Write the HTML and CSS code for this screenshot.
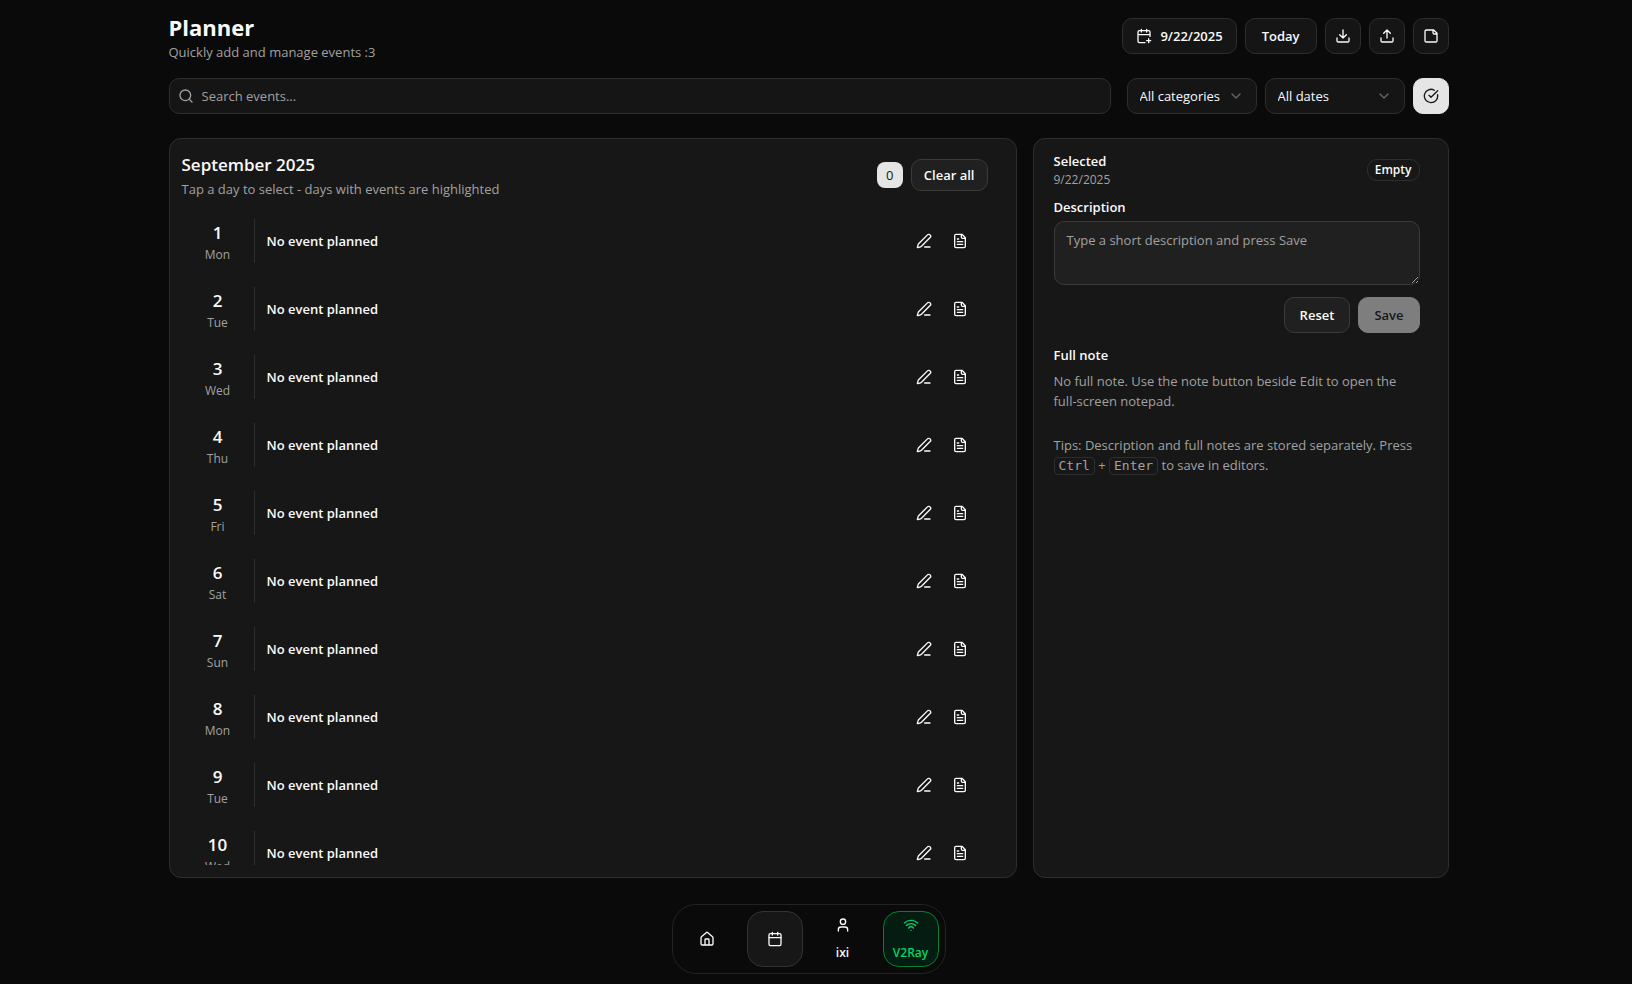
FILE: index.html
```html
<!DOCTYPE html>
<html lang="en">
<head>
<meta charset="utf-8">
<meta name="viewport" content="width=device-width, initial-scale=1">
<title>Planner</title>
<link rel="stylesheet" href="styles.css">
</head>
<body>
<svg class="sprite" aria-hidden="true">
  <symbol id="calendar-plus" viewBox="0 0 24 24"><path d="M16 19h6M16 2v4M19 16v6M21 12.6V6a2 2 0 0 0-2-2H5a2 2 0 0 0-2 2v14a2 2 0 0 0 2 2h8.5M3 10h18M8 2v4"/></symbol>
  <symbol id="download" viewBox="0 0 24 24"><path d="M12 15V3M21 15v4a2 2 0 0 1-2 2H5a2 2 0 0 1-2-2v-4M7 10l5 5 5-5"/></symbol>
  <symbol id="upload" viewBox="0 0 24 24"><path d="M12 3v12M17 8l-5-5-5 5M21 15v4a2 2 0 0 1-2 2H5a2 2 0 0 1-2-2v-4"/></symbol>
  <symbol id="note" viewBox="0 0 24 24"><path d="M16 3H5a2 2 0 0 0-2 2v14a2 2 0 0 0 2 2h14a2 2 0 0 0 2-2V8ZM15 3v4a2 2 0 0 0 2 2h4"/></symbol>
  <symbol id="search" viewBox="0 0 24 24"><circle cx="11" cy="11" r="8"/><path d="m21 21-4.3-4.3"/></symbol>
  <symbol id="chevron" viewBox="0 0 24 24"><path d="m6 9 6 6 6-6"/></symbol>
  <symbol id="check" viewBox="0 0 24 24"><path d="M21.8 10A10 10 0 1 1 17 3.335M9 11l3 3L22 4"/></symbol>
  <symbol id="pen" viewBox="0 0 24 24"><path d="M13 21h8M21.174 6.812a1 1 0 0 0-3.986-3.987L3.842 16.174a2 2 0 0 0-.5.83l-1.321 4.352a.5.5 0 0 0 .623.622l4.353-1.32a2 2 0 0 0 .83-.497z"/></symbol>
  <symbol id="file" viewBox="0 0 24 24"><path d="M15 2H6a2 2 0 0 0-2 2v16a2 2 0 0 0 2 2h12a2 2 0 0 0 2-2V7ZM14 2v4a2 2 0 0 0 2 2h4M10 9H8M16 13H8M16 17H8"/></symbol>
  <symbol id="home" viewBox="0 0 24 24"><path d="M15 21v-8a1 1 0 0 0-1-1h-4a1 1 0 0 0-1 1v8M3 10a2 2 0 0 1 .709-1.528l7-6a2 2 0 0 1 2.582 0l7 6A2 2 0 0 1 21 10v9a2 2 0 0 1-2 2H5a2 2 0 0 1-2-2z"/></symbol>
  <symbol id="calendar" viewBox="0 0 24 24"><path d="M8 2v4M16 2v4M3 10h18"/><rect x="3" y="4" width="18" height="18" rx="2"/></symbol>
  <symbol id="user" viewBox="0 0 24 24"><path d="M19 21v-2a4 4 0 0 0-4-4H9a4 4 0 0 0-4 4v2"/><circle cx="12" cy="7" r="4"/></symbol>
  <symbol id="wifi" viewBox="0 0 24 24"><path d="M12 20h.01M2 8.82a15 15 0 0 1 20 0M5 12.859a10 10 0 0 1 14 0M8.5 16.429a5 5 0 0 1 7 0"/></symbol>
</svg>

<div class="page">
  <header class="header">
    <div>
      <h1 class="title">Planner</h1>
      <p class="muted">Quickly add and manage events :3</p>
    </div>
    <div class="group header-actions">
      <button type="button" class="button with-icon"><svg class="icon"><use href="#calendar-plus"/></svg>9/22/2025</button>
      <button type="button" class="button">Today</button>
      <button type="button" class="button square" aria-label="Download"><svg class="icon"><use href="#download"/></svg></button>
      <button type="button" class="button square" aria-label="Upload"><svg class="icon"><use href="#upload"/></svg></button>
      <button type="button" class="button square" aria-label="Notes"><svg class="icon"><use href="#note"/></svg></button>
    </div>
  </header>

  <div class="toolbar">
    <label class="search">
      <svg class="icon"><use href="#search"/></svg>
      <input type="search" class="search-input" placeholder="Search events..." aria-label="Search events">
    </label>
    <div class="group">
      <label class="picker picker-category">
        <select class="select" aria-label="Category"><option>All categories</option></select>
        <svg class="icon"><use href="#chevron"/></svg>
      </label>
      <label class="picker picker-date">
        <select class="select" aria-label="Dates"><option>All dates</option></select>
        <svg class="icon"><use href="#chevron"/></svg>
      </label>
      <button type="button" class="button square primary" aria-label="Show completed"><svg class="icon"><use href="#check"/></svg></button>
    </div>
  </div>

  <main class="content">
    <section class="card month">
      <div class="month-header">
        <div>
          <h2 class="month-title">September 2025</h2>
          <p class="muted">Tap a day to select - days with events are highlighted</p>
        </div>
        <div class="group">
          <span class="count">0</span>
          <button type="button" class="button small raised">Clear all</button>
        </div>
      </div>
      <ul class="days" id="days"></ul>
    </section>

    <aside class="card details">
      <div class="selected">
        <div>
          <h3 class="heading">Selected</h3>
          <p class="date">9/22/2025</p>
        </div>
        <span class="badge">Empty</span>
      </div>
      <label class="heading description-label" for="description">Description</label>
      <textarea class="description" id="description" placeholder="Type a short description and press Save"></textarea>
      <div class="group actions">
        <button type="button" class="button raised">Reset</button>
        <button type="button" class="button primary" disabled>Save</button>
      </div>
      <h3 class="heading">Full note</h3>
      <p class="muted note">No full note. Use the note button beside Edit to open the full-screen notepad.</p>
      <p class="muted tips">Tips: Description and full notes are stored separately. Press <kbd>Ctrl</kbd> + <kbd>Enter</kbd> to save in editors.</p>
    </aside>
  </main>

  <nav class="dock" aria-label="Main">
    <a class="dock-item" href="#home" aria-label="Home"><svg class="icon"><use href="#home"/></svg></a>
    <a class="dock-item active" href="#planner" aria-label="Planner" aria-current="page"><svg class="icon"><use href="#calendar"/></svg></a>
    <a class="dock-item labelled" href="#profile"><svg class="icon"><use href="#user"/></svg>ixi</a>
    <a class="dock-item labelled online" href="#v2ray"><svg class="icon"><use href="#wifi"/></svg>V2Ray</a>
  </nav>
</div>
<script src="script.js"></script>
</body>
</html>
```
FILE: styles.css
```css
:root {
  --background: #0a0a0a;
  --card: #171717;
  --border: #2e2e2e;
  --input: #3a3a3a;
  --control: #151515;
  --raised: #202020;
  --text: #fafafa;
  --muted: #a1a1a1;
  --primary: #e5e5e5;
  --green: #00d468;
}

* { box-sizing: border-box; }

body, h1, h2, h3, p, ul { margin: 0; padding: 0; }

body {
  background: var(--background);
  color: var(--text);
  font: 13px/20px "Segoe UI", "Open Sans", "Noto Sans", sans-serif;
}

button, input, select, textarea { font: inherit; color: inherit; }

.sprite { display: none; }

.icon {
  width: 16px;
  height: 16px;
  flex: none;
  fill: none;
  stroke: currentColor;
  stroke-width: 2;
  stroke-linecap: round;
  stroke-linejoin: round;
}

.page {
  display: flex;
  flex-direction: column;
  height: 100vh;
  min-height: 600px;
  max-width: 1327px;
  margin: 0 auto;
  padding: 12px 31px 10px 16px;
}

.header {
  display: flex;
  justify-content: space-between;
  align-items: flex-start;
  margin-bottom: 16px;
}

.header-actions { padding-top: 6px; }

.title { font-size: 22px; line-height: 30px; font-weight: 700; }

.muted { color: var(--muted); }

.group { display: flex; align-items: center; gap: 8px; }

.button {
  display: inline-flex;
  align-items: center;
  justify-content: center;
  gap: 8px;
  height: 36px;
  padding: 0 16px;
  border: 1px solid var(--border);
  border-radius: 10px;
  background: var(--control);
  font-weight: 600;
  white-space: nowrap;
}

.button.with-icon { padding: 0 13px; }
.button.square { width: 36px; padding: 0; }
.button.small { height: 32px; padding: 0 12px; }
.button.raised { background: var(--raised); border-color: var(--input); }
.button.primary { background: var(--primary); border-color: var(--primary); color: var(--card); }
.button.primary:disabled { opacity: 0.5; }

.toolbar { display: flex; gap: 16px; margin-bottom: 24px; }

.search {
  display: flex;
  align-items: center;
  flex: 1;
  gap: 8px;
  height: 36px;
  padding: 0 8px;
  border: 1px solid var(--border);
  border-radius: 10px;
  background: var(--control);
  color: var(--muted);
}

.search-input {
  flex: 1;
  min-width: 0;
  padding: 0;
  border: 0;
  outline: 0;
  background: none;
}

::placeholder { color: var(--muted); opacity: 1; }

.picker { display: grid; align-items: center; }
.picker-category { width: 130px; }
.picker-date { width: 140px; }

.picker > * { grid-area: 1 / 1; }

.picker .icon {
  justify-self: end;
  margin-right: 13px;
  color: #666666;
  pointer-events: none;
}

.select {
  appearance: none;
  width: 100%;
  height: 36px;
  padding: 0 36px 0 12px;
  border: 1px solid var(--border);
  border-radius: 10px;
  background: var(--control);
}

.content {
  display: grid;
  grid-template-columns: repeat(3, minmax(0, 1fr));
  grid-template-rows: minmax(0, 1fr);
  gap: 16px;
  flex: 1;
  min-height: 0;
  margin-bottom: 26px;
}

.card {
  border: 1px solid var(--border);
  border-radius: 12px;
  background: var(--card);
}

.month {
  display: flex;
  flex-direction: column;
  grid-column: span 2;
  padding: 12px 28px 12px 12px;
}

.month-header {
  display: flex;
  justify-content: space-between;
  align-items: center;
  margin-bottom: 8px;
}

.month-title { font-size: 17px; line-height: 28px; font-weight: 600; }

.count {
  min-width: 26px;
  padding: 3px 9px;
  border-radius: 8px;
  background: var(--primary);
  color: var(--card);
  font-weight: 500;
  text-align: center;
}

.days {
  flex: 1;
  min-height: 0;
  overflow-y: auto;
  scrollbar-width: none;
  list-style: none;
}

.day { display: flex; align-items: center; padding: 12px; }

.day-date {
  width: 61px;
  padding-right: 12px;
  border-right: 1px solid var(--border);
  text-align: center;
}

.day-number { display: block; font-size: 17px; line-height: 28px; font-weight: 600; }
.day-name { display: block; font-size: 12px; line-height: 16px; color: var(--muted); }
.day-event { flex: 1; padding-left: 12px; font-weight: 600; }
.day-actions { display: flex; gap: 4px; }

.icon-button {
  display: grid;
  place-items: center;
  width: 32px;
  height: 32px;
  padding: 0;
  border: 0;
  border-radius: 8px;
  background: none;
}

.details { padding: 12px 28px 12px 20px; }

.selected {
  display: flex;
  justify-content: space-between;
  align-items: center;
  margin-bottom: 8px;
}

.heading { display: block; font-size: 13px; font-weight: 600; }
.date { font-size: 12px; line-height: 18px; color: var(--muted); }

.badge {
  padding: 2px 7px;
  border: 1px solid var(--border);
  border-radius: 10px;
  font-size: 12px;
  line-height: 16px;
  font-weight: 600;
}

.description-label { margin-bottom: 4px; }

.description {
  display: block;
  width: 100%;
  height: 64px;
  padding: 8px 12px;
  border: 1px solid var(--input);
  border-radius: 10px;
  outline: 0;
  background: var(--raised);
  resize: vertical;
}

.actions { justify-content: flex-end; margin: 12px 0; }
.actions .button { padding: 0 15px; }
.note { margin: 6px 0 24px; }

kbd {
  display: inline-block;
  padding: 0 4px;
  border: 1px solid var(--border);
  border-radius: 4px;
  font: 13px/16px "DejaVu Sans Mono", monospace;
}

.dock {
  display: flex;
  gap: 12px;
  align-self: center;
  padding: 6px;
  border: 1px solid #222222;
  border-radius: 24px;
}

.dock-item {
  display: flex;
  flex-direction: column;
  align-items: center;
  justify-content: center;
  width: 56px;
  height: 56px;
  border: 1px solid transparent;
  border-radius: 16px;
  color: var(--text);
  font-size: 12px;
  line-height: 16px;
  font-weight: 600;
  text-decoration: none;
}

.dock-item.active { background: var(--card); border-color: #333333; }
.dock-item.labelled { justify-content: space-between; padding: 5px 0; }
.dock-item.online { background: #051c13; border-color: #008236; color: var(--green); }
```
FILE: script.js
```js
const names = ["Sun", "Mon", "Tue", "Wed", "Thu", "Fri", "Sat"];

document.getElementById("days").innerHTML = Array.from({ length: 30 }, (_, i) => {
  const day = i + 1;
  return `<li class="day">
    <div class="day-date"><span class="day-number">${day}</span><span class="day-name">${names[day % 7]}</span></div>
    <span class="day-event">No event planned</span>
    <div class="day-actions">
      <button type="button" class="icon-button" aria-label="Edit day ${day}"><svg class="icon"><use href="#pen"/></svg></button>
      <button type="button" class="icon-button" aria-label="Open note for day ${day}"><svg class="icon"><use href="#file"/></svg></button>
    </div>
  </li>`;
}).join("");
```
